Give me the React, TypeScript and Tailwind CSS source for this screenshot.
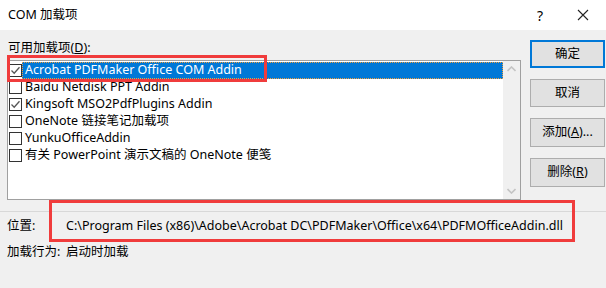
import { useState } from "react";

const items = [
  { name: "Acrobat PDFMaker Office COM Addin", checked: true },
  { name: "Baidu Netdisk PPT Addin", checked: false },
  { name: "Kingsoft MSO2PdfPlugins Addin", checked: true },
  { name: "OneNote 链接笔记加载项", checked: false },
  { name: "YunkuOfficeAddin", checked: false },
  { name: "有关 PowerPoint 演示文稿的 OneNote 便笺", checked: false },
];

function CheckBox({ checked }: { checked: boolean }) {
  return (
    <span className="flex h-[13px] w-[13px] shrink-0 items-center justify-center border border-[#333] bg-white">
      {checked && (
        <svg width="11" height="11" viewBox="0 0 11 11">
          <path d="M1.5 5.5 L4.2 8.2 L9.5 2.2" fill="none" stroke="#555" strokeWidth="1.3" />
        </svg>
      )}
    </span>
  );
}

export default function App() {
  const [selected, setSelected] = useState(0);

  return (
    <div className="relative h-[288px] w-[606px] overflow-hidden bg-[#f0f0f0] text-[12.5px] text-black [font-family:'Noto_Sans','Noto_Sans_CJK_SC',sans-serif]">
      {/* title bar */}
      <div className="flex h-[30px] items-center bg-white pl-[8px]">
        <span className="flex-1">COM 加载项</span>
        <span className="w-[40px] text-center text-[14px]">?</span>
        <span className="flex w-[46px] items-center justify-center">
          <svg width="12" height="12" viewBox="0 0 12 12">
            <path d="M1 1 L11 11 M11 1 L1 11" stroke="#222" strokeWidth="1.1" />
          </svg>
        </span>
      </div>

      <div className="flex h-[181px]">
        {/* list area */}
        <div className="flex w-[521px] flex-col pl-[7px] pt-[11px]">
          <div className="h-[19px] pl-[1px] leading-[14px]">
            可用加载项(<span className="underline">D</span>):
          </div>
          <div className="flex h-[140px] border border-[#a0a0a0] bg-white">
            <div className="flex-1 pt-[1px]">
              {items.map((it, i) => (
                <div
                  key={it.name}
                  onClick={() => setSelected(i)}
                  className="flex h-[17px] items-center pl-[1px]"
                >
                  <CheckBox checked={it.checked} />
                  <span
                    className={
                      i === selected
                        ? "flex h-[17px] flex-1 items-center border border-dotted border-[#f0a040] bg-[#0078d7] pl-[2px] text-white"
                        : "pl-[3px]"
                    }
                  >
                    {it.name}
                  </span>
                </div>
              ))}
            </div>
            <div className="flex w-[17px] flex-col items-center justify-between bg-[#f0f0f0] py-[5px]">
              <svg width="9" height="6" viewBox="0 0 9 6">
                <path d="M0.5 5 L4.5 1 L8.5 5" fill="none" stroke="#c4c4c4" strokeWidth="1.6" />
              </svg>
              <svg width="9" height="6" viewBox="0 0 9 6">
                <path d="M0.5 1 L4.5 5 L8.5 1" fill="none" stroke="#c4c4c4" strokeWidth="1.6" />
              </svg>
            </div>
          </div>
        </div>

        {/* buttons */}
        <div className="ml-[9px] flex flex-col gap-[11px] pt-[10px]">
          <button className="h-[28px] w-[75px] border-2 border-[#0078d7] bg-[#e1e1e1]">确定</button>
          <button className="h-[28px] w-[75px] border border-[#adadad] bg-[#e1e1e1]">取消</button>
          <button className="h-[29px] w-[75px] border border-[#adadad] bg-[#e1e1e1]">
            添加(<span className="underline">A</span>)...
          </button>
          <button className="h-[29px] w-[75px] border border-[#adadad] bg-[#e1e1e1]">
            删除(<span className="underline">R</span>)
          </button>
        </div>
      </div>

      <div className="h-px bg-[#d8d8d8]" />

      <div className="flex h-[26px] items-center pl-[7px] pt-[3px]">
        <span className="w-[59px]">位置:</span>
        <span>C:\Program Files (x86)\Adobe\Acrobat DC\PDFMaker\Office\x64\PDFMOfficeAddin.dll</span>
      </div>
      <div className="flex h-[26px] items-center pl-[7px] pt-[3px]">
        <span className="w-[59px]">加载行为:</span>
        <span>启动时加载</span>
      </div>

      {/* annotation boxes */}
      <div className="pointer-events-none absolute left-[7px] top-[55px] h-[27px] w-[260px] border-[3px] border-[#f03c3c]" />
      <div className="pointer-events-none absolute left-[49px] top-[200px] h-[42px] w-[526px] border-[3px] border-[#f03c3c]" />
    </div>
  );
}
